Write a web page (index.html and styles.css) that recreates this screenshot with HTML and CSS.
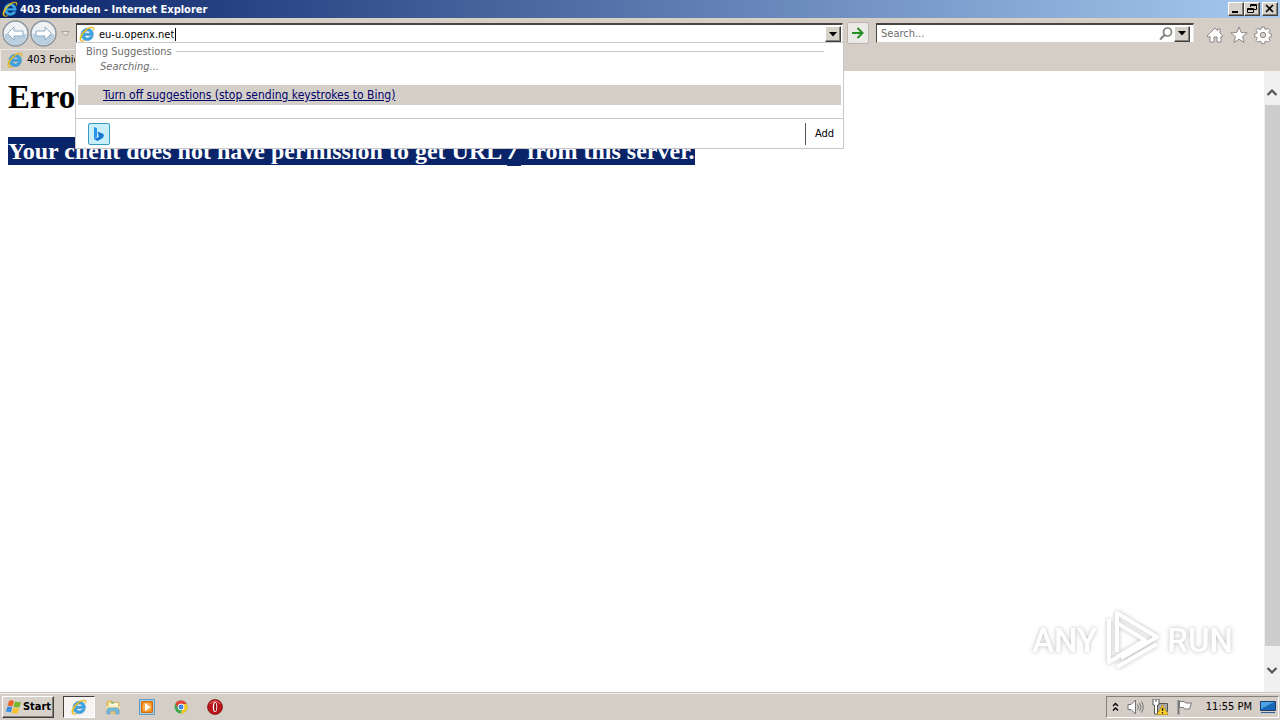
FILE: index.html
```html
<!DOCTYPE html>
<html lang="en">
<head>
<meta charset="utf-8">
<title>403 Forbidden - Internet Explorer</title>
<link rel="stylesheet" href="styles.css">
</head>
<body>
<svg class="sprite" aria-hidden="true">
  <symbol id="ie" viewBox="0 0 16 16">
    <path d="M14.4 9.4H5.6c.1 1.6 1.2 2.5 2.8 2.5 1.100 0 2-.4 2.500-1.300h3.200c-.9 2.500-3.100 3.900-5.800 3.900-3.600 0-6.200-2.500-6.200-6s2.600-6.100 6.200-6.100c3.900 0 6.300 2.800 6.100 7zM5.700 7.200h5.500C11 5.800 10 5 8.500 5S6 5.800 5.700 7.200z" fill="#3ba7e6" stroke="#2379b8" stroke-width=".5"/>
    <path d="M15 1.700C12.800-.3 7.500 2 4.200 5.800.9 9.500-.2 13.500 1.700 15c1 .8 2.600.5 4.300-.5-1.600.6-2.700.6-3.300 0C1.300 13 2.700 9.500 5.600 6.300S12.300 1 13.900 2.100c.6.500.6 1.400.2 2.600 1-1.300 1.400-2.500.9-3z" fill="#f5c928" stroke="#d9a400" stroke-width=".4"/>
  </symbol>
</svg>
<div class="window">
  <header class="titlebar">
    <svg class="ie"><use href="#ie"/></svg>
    <span class="title">403 Forbidden - Internet Explorer</span>
    <div class="controls">
      <button class="raised ctl" aria-label="Minimize"><svg width="12" height="10"><path d="M2 8h6" stroke="#000" stroke-width="2"/></svg></button>
      <button class="raised ctl" aria-label="Restore"><svg width="12" height="10" fill="none" stroke="#000"><path d="M4.500 3V.5h6v5H8M4 1.500h7M1.500 4.500h6v4h-6zM1 5.500h7"/></svg></button>
      <button class="raised ctl close" aria-label="Close"><svg width="12" height="10"><path d="M2 1l7 7M9 1L2 8" stroke="#000" stroke-width="1.600"/></svg></button>
    </div>
  </header>

  <div class="navbar">
    <div class="history">
      <button class="bare" aria-label="Back"><svg width="27" height="27" viewBox="0 0 27 27"><circle cx="13.500" cy="13.500" r="12.500" fill="#eef2f5" stroke="#8d969e" stroke-width="1.500"/><path d="M2.500 14a11 11 0 0 0 22 0z" fill="#b9cfdf"/><path d="M12 7l-6.500 6.500L12 20v-4h9v-5h-9z" fill="#fff" stroke="#8fabc2"/></svg></button>
      <button class="bare" aria-label="Forward"><svg width="27" height="27" viewBox="0 0 27 27"><circle cx="13.500" cy="13.500" r="12.500" fill="#eef2f5" stroke="#8d969e" stroke-width="1.500"/><path d="M2.500 14a11 11 0 0 0 22 0z" fill="#b9cfdf"/><path d="M15 7l6.500 6.500L15 20v-4H6v-5h9z" fill="#fff" stroke="#8fabc2"/></svg></button>
      <button class="bare recent" aria-label="Recent pages"><svg width="11" height="8"><path d="M1.500 1.500h8l-4 4.500z" fill="#e6e1dc" stroke="#aaa6a0"/></svg></button>
    </div>
    <div class="address">
      <div class="field">
        <svg class="ie"><use href="#ie"/></svg>
        <input class="url" type="text" value="eu-u.openx.net" aria-label="Address">
        <span class="caret"></span>
        <button class="raised drop" aria-label="Show address list"><svg width="8" height="5"><path d="M0 0h8L4 4.500z"/></svg></button>
      </div>
      <div class="popup">
        <div class="group"><span>Bing Suggestions</span></div>
        <div class="searching">Searching...</div>
        <div class="optout"><a href="#">Turn off suggestions (stop sending keystrokes to Bing)</a></div>
        <div class="providers">
          <button class="bing" aria-label="Bing"><svg width="20" height="20"><path d="M5 3l3 1v9l-3 2z" fill="#2595ed"/><path d="M8.500 7.500l6 2.500c1 2.400-.5 4-2 4.800L8.500 17 5 15l5-2z" fill="#1676d2"/></svg></button>
          <button class="add">Add</button>
        </div>
      </div>
    </div>
    <button class="go" aria-label="Go"><svg width="14" height="14"><path d="M1 7h10M6.500 2l5 5-5 5" fill="none" stroke="#278d20" stroke-width="2"/></svg></button>
    <div class="field search">
      <input type="text" placeholder="Search..." aria-label="Search">
      <button class="bare" aria-label="Run search"><svg width="16" height="16" fill="none" stroke="#85817e"><circle cx="9.500" cy="6" r="4" stroke-width="1.700"/><path d="M6.500 9L2 13.500" stroke-width="2.200"/></svg></button>
      <button class="raised drop" aria-label="Search providers"><svg width="8" height="5"><path d="M0 0h8L4 4.500z"/></svg></button>
    </div>
    <div class="tools">
      <button class="bare" aria-label="Home"><svg width="18" height="18" viewBox="0 0 18 18"><path d="M9 2l2.500 2.500V3H14v4l3 3-1.200 1L15 10.300V16h-4v-5H8v5H4v-5.700L2.200 11 1 10z" fill="#fff" stroke="#8a8886"/></svg></button>
      <button class="bare" aria-label="Favorites"><svg width="18" height="18" viewBox="0 0 18 18"><path d="M9 1l2.300 5.500 5.900.4-4.600 3.700 1.500 5.900L9 13.300l-5.100 3.200 1.500-5.900L.8 6.900l5.900-.4z" fill="#fff" stroke="#8a8886"/></svg></button>
      <button class="bare" aria-label="Tools"><svg width="18" height="18" viewBox="0 0 18 18"><path d="M7.500 1h3l.4 2 1.300.5 1.800-1.200 2 2-1.200 1.800.5 1.300 2 .4v3l-2 .4-.5 1.300 1.200 1.800-2 2-1.800-1.200-1.300.5-.4 2h-3l-.4-2-1.300-.5L4 16.300l-2-2 1.200-1.800-.5-1.300-2-.4v-3l2-.4.5-1.300L2 4.300l2-2 1.800 1.200L7.100 3z" fill="#fff" stroke="#8a8886"/><circle cx="9" cy="9" r="2.700" fill="#d8d2cc" stroke="#8a8886"/></svg></button>
    </div>
  </div>

  <div class="tabs"><button class="tab"><svg class="ie"><use href="#ie"/></svg><span>403 Forbidden</span></button></div>

  <div class="viewport">
    <main class="page">
      <h1>Error</h1>
      <h2><span class="sel">Your client does not have permission to get URL <code>/</code> from this server.</span></h2>
    </main>
    <div class="scrollbar">
      <button class="bare" aria-label="Scroll up"><svg width="12" height="9"><path d="M1.500 7L6 2.500 10.500 7" fill="none" stroke="#555" stroke-width="2.200"/></svg></button>
      <div class="thumb"></div>
      <button class="bare" aria-label="Scroll down"><svg width="12" height="9"><path d="M1.500 2L6 6.500 10.500 2" fill="none" stroke="#555" stroke-width="2.200"/></svg></button>
    </div>
    <div class="watermark">
      <span>ANY</span>
      <svg width="62" height="64" viewBox="0 0 62 64" fill="none" stroke="#fff" stroke-width="4" stroke-linejoin="round"><path d="M16 44V5l40 24-36 21M16 15l28 17-28 17M8 11v43l9-5M16 59l40-23"/></svg>
      <span>RUN</span>
    </div>
  </div>

  <footer class="taskbar">
    <button class="raised start"><svg width="18" height="16" viewBox="0 0 18 16"><path d="M4 2c2-1 3.500-.8 5 .2L7.500 7.500C6 6.500 4.500 6.500 2.500 7z" fill="#ef6125"/><path d="M10 2.500c2 1 3.700 1 6 .2L14.500 8c-2 .8-4 .6-6-.2z" fill="#76b82c"/><path d="M2.200 8c2-.8 3.500-.5 5 .4L5.800 13.500C4.300 12.500 2.800 12.500.8 13z" fill="#3a8de0"/><path d="M8.300 8.700c2 1 3.700 1 6 .2L12.800 14c-2 .8-4 .6-6-.2z" fill="#fbc02c"/></svg>Start</button>
    <nav class="apps">
      <button class="app active" aria-label="Internet Explorer"><svg class="ie"><use href="#ie"/></svg></button>
      <button class="app" aria-label="Explorer"><svg width="16" height="16"><path d="M2 2h5l1 1.500h6V14H2z" fill="#edcf70" stroke="#cfaa48" stroke-width=".6"/><path d="M4 4h9v4H4z" fill="#fff8db"/><path d="M6 4h3" stroke="#45a862"/><path d="M1 7.500h14V11H1z" fill="#f7e59c"/><path d="M2 15v-4q0-2 2-2h8q2 0 2 2v4h-3v-3H5v3z" fill="#79bce0" stroke="#4e98c5" stroke-width=".6"/></svg></button>
      <button class="app" aria-label="Media Player"><svg width="16" height="16"><path d="M.5.500h15v15H.5z" fill="#a6d2ee" stroke="#5c9bc6"/><path d="M2.500 2.500h11v11h-11z" fill="#f08c1d" stroke="#d66c0a"/><circle cx="8" cy="8" r="4.500" fill="#f9aa48"/><path d="M6 4l5.500 4L6 12z" fill="#fff"/></svg></button>
      <button class="app" aria-label="Chrome"><svg width="16" height="16"><circle cx="8" cy="8" r="6.500" fill="#38a852"/><path d="M2.400 4.700A6.500 6.500 0 0 1 13.700 5H8L5.300 9.500z" fill="#e64435"/><path d="M13.700 5A6.500 6.500 0 0 1 7.500 14.500L10.600 9 8 5z" fill="#fbc924"/><circle cx="8" cy="8" r="3" fill="#4285e8" stroke="#fff"/></svg></button>
      <button class="app" aria-label="Opera"><svg width="16" height="16"><circle cx="8" cy="8" r="7.500" fill="#b9151b" stroke="#76100e" stroke-width=".7"/><path d="M3 5q5-6 10 0" fill="none" stroke="#e77"/><ellipse cx="8" cy="8" rx="2.200" ry="5" fill="#fff"/><ellipse cx="8.200" cy="8" rx="1.100" ry="4.300" fill="#8d1012"/></svg></button>
    </nav>
    <div class="tray">
      <button class="bare" aria-label="Show hidden icons"><svg width="7" height="10" fill="none" stroke="#000" stroke-width="1.400"><path d="M1 4l2.500-2.500L6 4M1 8.500L3.500 6 6 8.500"/></svg></button>
      <svg width="17" height="16" fill="none" stroke="#737373"><path d="M1 5.500h3L8.500 1v14L4 10.500H1z" fill="#fff"/><path d="M10.500 5.500q2 2.500 0 5M12.500 4q3 4 0 8M14.500 2.500q3.500 5.500 0 11"/></svg>
      <svg width="16" height="16"><path d="M5.500 4.500h10v8h-10z" fill="#aaa" stroke="#555"/><path d="M1 0h6v6H5.500v9h-3V6H1z" fill="#fff" stroke="#555"/><path d="M4 0v3" stroke="#555"/><path d="M10.500 6L16 15.500H5z" fill="#ffd42a" stroke="#b18600" stroke-width=".7"/><path d="M10.500 9v3M10.500 13v1.500" stroke="#222" stroke-width="1.400"/></svg>
      <svg width="17" height="16"><path d="M2.500 1v14.500" stroke="#777" stroke-width="2"/><path d="M3.500 2.500h5l1 1.500h6l-2 6H8.500L7.500 8.500h-4z" fill="#fff" stroke="#777"/></svg>
      <time>11:55 PM</time>
      <button class="bare" aria-label="Show desktop"><svg width="16" height="14"><path d="M.5 1.500h15v9H.5z" fill="#1866b8" stroke="#203d73"/><path d="M1 2h13L1 9z" fill="#4ba1e1"/><path d="M1 12.500h14" stroke="#315b94"/></svg></button>
    </div>
  </footer>
</div>
</body>
</html>
```
FILE: styles.css
```css
* { box-sizing: border-box; }
body {
  margin: 0;
  font-family: "DejaVu Sans Condensed", "DejaVu Sans", sans-serif;
  font-size: 11px;
  color: #000;
}
button, input { font: inherit; color: inherit; margin: 0; padding: 0; }
svg { display: block; flex: none; }
.sprite { position: absolute; width: 0; height: 0; }
.ie { width: 16px; height: 16px; }
.window { display: flex; flex-direction: column; height: 100vh; background: #d4cec7; overflow: hidden; }
.bare { display: flex; border: 0; background: none; }
.raised {
  display: flex; align-items: center; justify-content: center;
  background: #d6d2ca;
  border: 1px solid;
  border-color: #fff #404040 #404040 #fff;
  box-shadow: inset -1px -1px #858078;
}

.titlebar {
  display: flex; align-items: center; gap: 2px;
  height: 18px; padding: 0 2px;
  background: linear-gradient(90deg, #0a246a, #a6caf0);
  color: #fff;
}
.title { flex: 1; font-weight: bold; white-space: nowrap; }
.controls { display: flex; }
.ctl { width: 16px; height: 14px; }
.close { margin-left: 2px; }

.navbar { display: flex; align-items: flex-start; height: 31px; padding: 4px 8px 0 2px; border-top: 1px solid #d8d4c0; }
.history { display: flex; align-items: center; width: 74px; margin-top: -3px; gap: 1px; }
.recent { margin-left: 2px; }
.address { position: relative; flex: 1; }
.field {
  display: flex; align-items: center;
  height: 20px; padding: 1px;
  background: #fff;
  border: 1px solid;
  border-color: #484440 #e8e4df #d4d0c8 #484440;
  border-top-width: 2px;
}
.address .field { padding: 1px 1px 0 2px; gap: 4px; }
.field input { border: 0; outline: 0; background: none; min-width: 0; flex: 1; height: 16px; }
.field .url { field-sizing: content; flex: none; }
.caret { width: 1px; height: 13px; background: #000; margin-left: -3px; }
.drop { width: 16px; height: 16px; }
.address .drop { margin-left: auto; }
.go { display: flex; align-items: center; justify-content: center; width: 22px; height: 22px; margin: -1px 7px 0 4px; background: #ebe9e6; border: 1px solid #b9b4ae; border-radius: 2px; }
.search { width: 318px; padding: 1px 3px 1px 4px; }
.search input::placeholder { color: #6d6d6d; opacity: 1; }
.tools { display: flex; gap: 6px; margin: 3px 0 0 12px; }

.popup {
  position: absolute; z-index: 2; top: 19px; left: -1px; right: -1px;
  background: #fff; border: 1px solid #c8c8c8;
}
.group { display: flex; align-items: center; gap: 4px; height: 16px; margin: 0 19px 0 10px; color: #6d6d6d; }
.group::after { content: ""; flex: 1; height: 1px; background: #c8c8c8; }
.searching { height: 16px; line-height: 16px; padding-left: 24px; color: #6d6d6d; font-style: italic; }
.optout { margin: 10px 2px 13px; padding-left: 25px; height: 20px; line-height: 20px; background: #d4d0c8; font-size: 12px; }
.optout a { color: #00006a; }
.providers { display: flex; align-items: center; justify-content: space-between; height: 30px; padding: 0 0 0 12px; border-top: 1px solid #c8c8c8; }
.bing { display: flex; width: 22px; height: 22px; background: #c9effc; border: 1px solid #3899c7; border-radius: 2px; }
.add { width: 38px; height: 22px; background: none; border: 0; border-left: 1px solid #555; }

.tabs { display: flex; height: 22px; }
.tab { display: flex; align-items: center; gap: 4px; width: 180px; padding: 0 0 2px 6px; background: none; border: 0; border-top: 1px solid #eeeae5; border-left: 1px solid #eeeae5; white-space: nowrap; }

.viewport { position: relative; display: flex; flex: 1; min-height: 0; background: #fff; }
.page { flex: 1; padding: 8px; font-family: "Liberation Serif", serif; }
h1, h2 { margin: 0 0 21px; font-weight: bold; }
h1 { font-size: 33px; line-height: 37px; }
h2 { font-size: 24px; line-height: 28px; }
.sel { padding: 1px 0; background: #0a246a; color: #fff; }
code { font-family: "Liberation Mono", monospace; background: #0a246a; }
.scrollbar { display: flex; flex-direction: column; width: 16px; background: #f0f0f0; }
.scrollbar .bare { flex: none; height: 34px; justify-content: center; padding-top: 17px; }
.scrollbar .bare:last-child { height: 46px; padding-top: 20px; }
.thumb { flex: 1; margin-left: 1px; background: #cdcdcd; }
.watermark {
  position: absolute; right: 47px; bottom: 20px;
  display: flex; align-items: center; gap: 4px;
  font: 500 33px Roboto, "Liberation Sans", sans-serif;
  color: #fff; filter: drop-shadow(0 0 2px #bbb);
}

.taskbar { display: flex; align-items: center; gap: 9px; height: 28px; padding: 2px 1px 2px 2px; border-top: 1px solid #c8c4bd; box-shadow: inset 0 1px #f4f2ee; }
.start { width: 52px; height: 22px; font-weight: bold; }
.apps { display: flex; flex: 1; gap: 2px; }
.app { display: flex; align-items: center; justify-content: center; width: 32px; height: 22px; background: none; border: 1px solid transparent; }
.active { background: #f6f5f3; border-color: #404040 #fff #fff #404040; }
.tray { display: flex; align-items: center; gap: 8px; height: 22px; padding: 0 2px 0 5px; border: 1px solid; border-color: #858078 #fff #fff #858078; }
.tray time { margin-left: 5px; white-space: nowrap; }
```
